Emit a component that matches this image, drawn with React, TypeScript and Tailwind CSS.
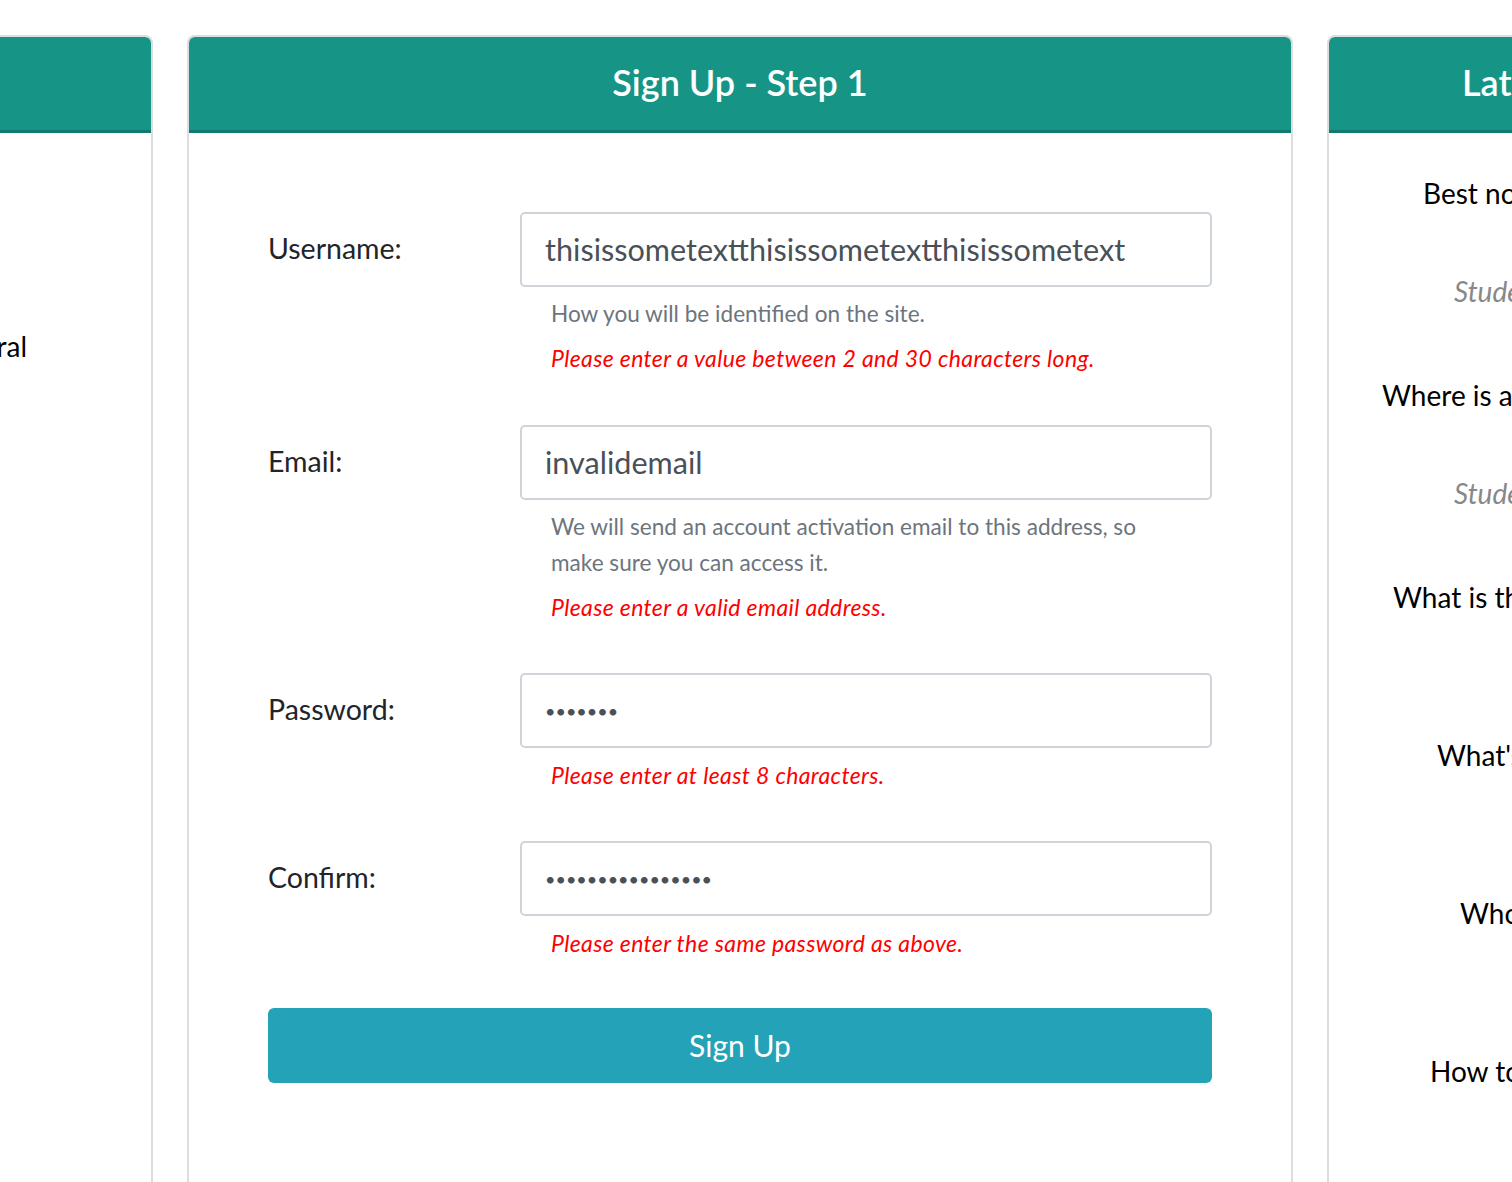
import React from "react";

const font = { fontFamily: "Lato, 'Noto Sans', sans-serif" };

function Header({ title }: { title: string }) {
  return (
    <div className="h-[96px] bg-[#169587] border-b-[3px] border-[#117a6f] rounded-t-[6px] flex items-center justify-center">
      <span className="text-white text-[36px] font-semibold leading-none mb-[4px]">{title}</span>
    </div>
  );
}

function Field({
  label,
  type,
  value,
  help,
  error,
  mb,
}: {
  label: string;
  type: string;
  value: string;
  help?: React.ReactNode;
  error: string;
  mb: string;
}) {
  const isPw = type === "password";
  return (
    <div className={"grid grid-cols-[252px_1fr] " + mb}>
      <label className="text-[28.5px] text-[#212529] pt-[16px] leading-[40px]">{label}</label>
      <div className="flex flex-col">
        <input
          type={type}
          readOnly
          defaultValue={value}
          className={
            "h-[75px] w-full border-2 border-[#ced4da] rounded-[5px] px-[23px] text-[#495057] outline-none bg-white " +
            (isPw ? "text-[18px]" : "text-[30.6px]")
          }
          style={font}
        />
        <div className="px-[31px] mt-[9px] flex flex-col gap-[8px]">
          {help && <div className="text-[22.6px] leading-[36px] text-[#6c757d]">{help}</div>}
          <div className="text-[23px] tracking-[0.36px] leading-[36px] text-[#ff0000] italic">{error}</div>
        </div>
      </div>
    </div>
  );
}

export default function App() {
  return (
    <div className="w-[1512px] h-[1182px] overflow-hidden bg-white" style={font}>
      <div className="flex gap-[34px] pt-[35px] h-full">
        {/* left panel */}
        <div className="w-[540px] ml-[-387px] shrink-0 border-2 border-b-0 border-[#dddddd] rounded-t-[8px] flex flex-col">
          <Header title="Categories" />
          <div className="pt-[192px] text-right pr-[124px] text-[28px] text-black">General</div>
        </div>

        {/* middle panel */}
        <div className="w-[1106px] shrink-0 border-2 border-b-0 border-[#dddddd] rounded-t-[8px] flex flex-col">
          <Header title="Sign Up - Step 1" />
          <div className="px-[79px] pt-[79px]">
            <Field
              label="Username:"
              type="text"
              value="thisissometextthisissometextthisissometext"
              help="How you will be identified on the site."
              error="Please enter a value between 2 and 30 characters long."
              mb="mb-[49px]"
            />
            <Field
              label="Email:"
              type="text"
              value="invalidemail"
              help={
                <>
                  We will send an account activation email to this address, so
                  <br />
                  make sure you can access it.
                </>
              }
              error="Please enter a valid email address."
              mb="mb-[48px]"
            />
            <Field
              label="Password:"
              type="password"
              value="1234567"
              error="Please enter at least 8 characters."
              mb="mb-[48px]"
            />
            <Field
              label="Confirm:"
              type="password"
              value="1234567890123456"
              error="Please enter the same password as above."
              mb="mb-[47px]"
            />
            <button className="w-full h-[75px] bg-[#24a3b8] rounded-[6px] text-white text-[30px]">
              Sign Up
            </button>
          </div>
        </div>

        {/* right panel */}
        <div className="w-[540px] shrink-0 border-2 border-b-0 border-[#dddddd] rounded-t-[8px] flex flex-col">
          <div className="h-[96px] bg-[#169587] border-b-[3px] border-[#117a6f] rounded-t-[6px] flex items-center pl-[133px]">
            <span className="text-white text-[36px] font-semibold leading-none whitespace-nowrap mb-[4px]">Latest Questions</span>
          </div>
          <div className="flex flex-col text-[28px] text-black leading-[40px] whitespace-nowrap">
            <div className="mt-[40px] pl-[94px]">Best note-taking method?</div>
            <div className="mt-[58px] pl-[125px] italic text-[#888888]">Student</div>
            <div className="mt-[64px] pl-[53px]">Where is a good place to study?</div>
            <div className="mt-[58px] pl-[125px] italic text-[#888888]">Student</div>
            <div className="mt-[64px] pl-[64px]">What is the best way to learn?</div>
            <div className="mt-[118px] pl-[108px]">What's a good schedule?</div>
            <div className="mt-[118px] pl-[131px]">Who should I ask?</div>
            <div className="mt-[118px] pl-[101px]">How to stay focused?</div>
          </div>
        </div>
      </div>
    </div>
  );
}
